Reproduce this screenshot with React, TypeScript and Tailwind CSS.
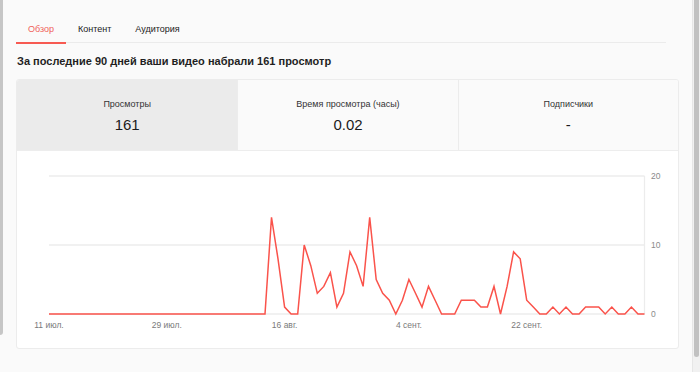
import React from 'react';

// daily views, 11 июл. → 10 окт.
const views = [
  ...Array(34).fill(0),
  14, 8, 1, 0, 0, 10, 7, 3, 4, 6, 1, 3, 9, 7, 4, 14, 5, 3, 2, 0,
  2, 5, 3, 1, 4, 2, 0, 0, 0, 2, 2, 2, 1, 1, 4, 0, 4, 9, 8, 2,
  1, 0, 0, 1, 0, 1, 0, 0, 1, 1, 1, 0, 1, 0, 0, 1, 0, 0,
];

const X0 = 49;
const X1 = 644.5;
const Y0 = 313;
const PX = 6.9;

const tabs = ['Обзор', 'Контент', 'Аудитория'];
const stats = [
  { label: 'Просмотры', value: '161', active: true },
  { label: 'Время просмотра (часы)', value: '0.02' },
  { label: 'Подписчики', value: '-' },
];
const ticks = [
  { day: 0, text: '11 июл.' },
  { day: 18, text: '29 июл.' },
  { day: 36, text: '16 авг.' },
  { day: 55, text: '4 сент.' },
  { day: 73, text: '22 сент.' },
];

function Chart() {
  const step = (X1 - X0) / (views.length - 1);
  const pts = views.map((v, i) => `${(X0 + i * step).toFixed(1)},${(Y0 - v * PX).toFixed(1)}`).join(' ');
  return (
    <svg viewBox="17 150 661 197" width={661} height={197} className="block">
      {[0, 10, 20].map((v) => (
        <g key={v}>
          <line x1={X0} x2={X1} y1={Y0 - v * PX} y2={Y0 - v * PX} stroke="#ececec" strokeWidth={1.5} />
          <text x={651} y={Y0 - v * PX + 3} fontSize={8.5} fill="#8a8a8a">{v}</text>
        </g>
      ))}
      <line x1={X1} x2={X1} y1={Y0 - 20 * PX} y2={Y0} stroke="#ececec" strokeWidth={1.2} />
      {ticks.map((t) => (
        <text key={t.text} x={X0 + t.day * step} y={327} fontSize={8.5} fill="#7a7a7a" textAnchor="middle">{t.text}</text>
      ))}
      <polyline points={pts} fill="none" stroke="#fa534b" strokeWidth={1.5} strokeLinejoin="miter" />
    </svg>
  );
}

export default function App() {
  return (
    <div className="relative flex h-[372px] w-[700px] overflow-hidden bg-[#fafafa] font-['Liberation_Sans',Arial,sans-serif] text-[#1c1c1c]">
      <div className="h-[335px] w-[3px] shrink-0 rounded-br bg-[#c6c6c6]" />
      <div className="w-[663px] shrink-0 pl-[13px]">
        <div className="mt-[16px] flex border-b-[1.5px] border-[#ebebeb]">
          {tabs.map((t, i) => (
            <div
              key={t}
              className={
                i === 0
                  ? 'relative h-[26px] px-3 text-[9px] leading-[27px] text-[#f0625a]'
                  : 'relative h-[26px] px-3 text-[9px] leading-[27px] text-[#222]'
              }
            >
              {t}
              {i === 0 && <div className="absolute -bottom-[1.5px] left-0 right-0 h-[2px] bg-[#f75a52]" />}
            </div>
          ))}
        </div>

        <h1 className="mt-[8px] pl-px text-[11px] font-bold leading-[20px] text-[#1f1f1f]">
          За последние 90 дней ваши видео набрали 161 просмотр
        </h1>

        <div className="mt-[8px] w-[663px] overflow-hidden rounded-[3px] border border-[#ececec] bg-white">
          <div className="grid h-[71px] grid-cols-3 border-b border-[#ededed]">
            {stats.map((s, i) => (
              <div
                key={s.label}
                className={
                  (s.active ? 'bg-[#ebebeb] ' : 'bg-[#fafafa] ') +
                  (i > 0 ? 'border-l border-[#ececec] ' : '') +
                  'flex flex-col items-center pt-[17px]'
                }
              >
                <span className="text-[9px] leading-[14px] text-[#333]">{s.label}</span>
                <span className="mt-[3px] text-[15px] leading-[22px] text-[#1c1c1c]">{s.value}</span>
              </div>
            ))}
          </div>
          <Chart />
        </div>
      </div>
      <div className="ml-auto flex h-full w-[8px] flex-col border-l border-[#e6e6e6] bg-[#f1f1f1]">
        <div className="mx-auto h-[357px] w-[5px] rounded-b-full bg-[#c1c1c1]" />
      </div>
    </div>
  );
}
